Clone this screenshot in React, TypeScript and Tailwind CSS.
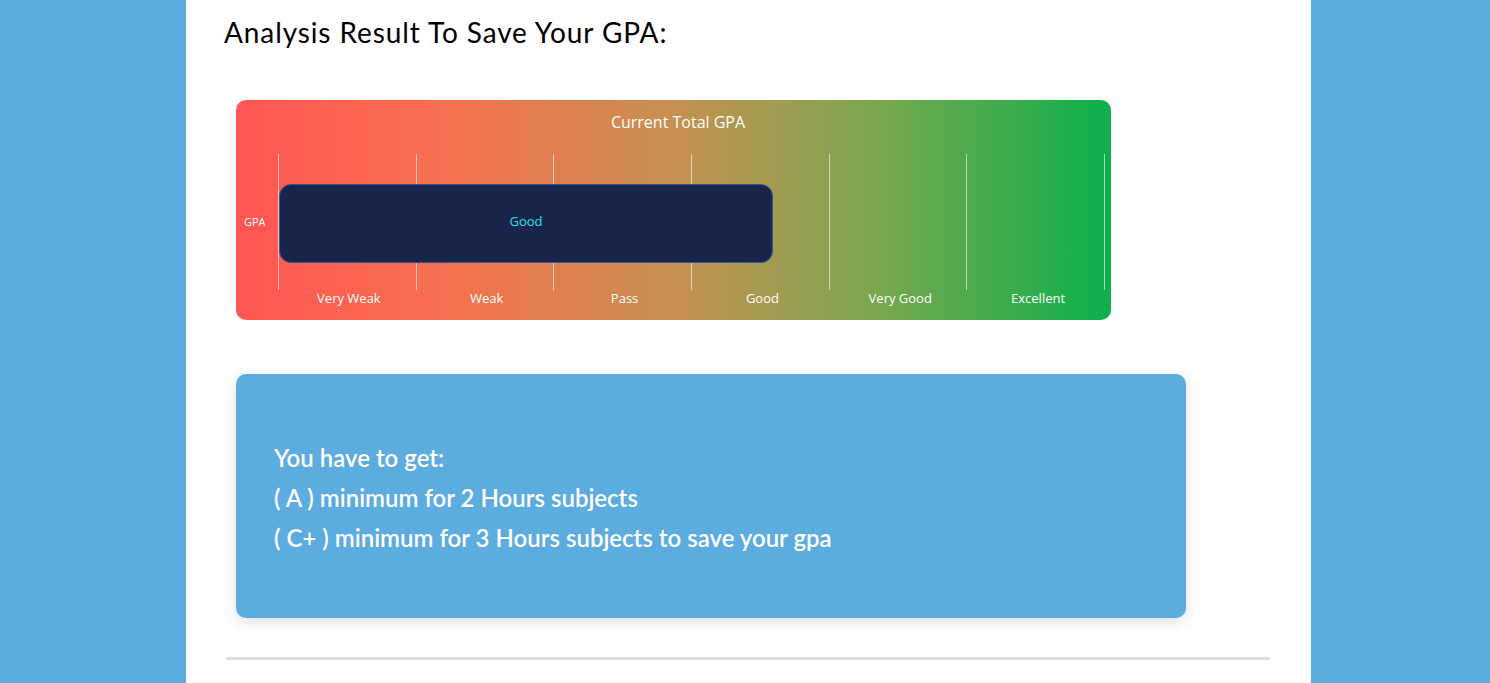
import React from 'react'

const levels = ['Very Weak', 'Weak', 'Pass', 'Good', 'Very Good', 'Excellent']

const GpaChart = () => {
  return (
    <div className="h-[220px] w-[875px] rounded-[10px] bg-[linear-gradient(to_right,#ff5553_0%,#f5724f_25%,#c69050_50%,#7ea64e_72%,#0cb04d_100%)] pt-[12px] font-['Open_Sans',sans-serif] text-white">
      <div className="pl-[9px] text-center text-[16px] leading-[20px]">Current Total GPA</div>

      {/* grille des niveaux */}
      <div className="mt-[22px] flex h-[136px]">
        <div className="flex w-[42px] items-center pl-[8px] text-[11px]">GPA</div>
        <div className="relative grid w-[827px] grid-cols-6 border-r border-white/60">
          {levels.map((l) => (
            <div key={l} className="border-l border-white/60" />
          ))}
          {/* barre du GPA actuel */}
          <div className="absolute left-[1px] top-[30px] flex h-[79px] w-[494px] items-center justify-center rounded-[12px] border-[1.5px] border-[#34569a] bg-[#18244a] pb-[3px]">
            <span className="text-[13px] text-[#1ee4ea]">Good</span>
          </div>
        </div>
      </div>

      <div className="ml-[42px] grid w-[827px] grid-cols-6 text-center text-[13px] leading-[16px]">
        {levels.map((l) => (
          <div key={l} className="pl-[4px]">
            {l}
          </div>
        ))}
      </div>
    </div>
  )
}

const App = () => {
  return (
    <div className="flex min-h-[683px] bg-[#5dacdf] pl-[186px]">
      <div className="h-[683px] w-[1125px] overflow-hidden bg-white">
        <h1 className="pl-[38px] pt-[12px] font-['Lato',sans-serif] text-[28px] leading-[40px] tracking-[0.9px] text-black">
          Analysis Result To Save Your GPA:
        </h1>

        <div className="ml-[50px] mt-[48px]">
          <GpaChart />
        </div>

        <div className="ml-[50px] mt-[54px] flex h-[244px] w-[950px] flex-col justify-center rounded-[10px] bg-[#5dacdf] pl-[38px] pt-[4px] font-['Lato',sans-serif] text-[24px] font-semibold leading-[40px] text-white shadow-[0_4px_14px_rgba(0,0,0,0.12)]">
          <p>You have to get:</p>
          <p>( A ) minimum for 2 Hours subjects</p>
          <p>( C+ ) minimum for 3 Hours subjects to save your gpa</p>
        </div>

        <div className="ml-[40px] mt-[39px] h-[3px] w-[1044px] bg-[#dddddd]" />
      </div>
    </div>
  )
}

export default App
